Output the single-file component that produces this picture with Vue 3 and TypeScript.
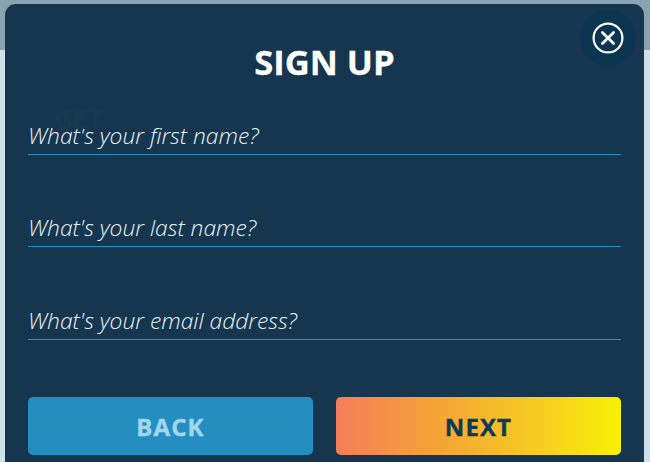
<script setup lang="ts">
const fields: string[] = [
  "What's your first name?",
  "What's your last name?",
  "What's your email address?",
];
</script>

<template>
  <div class="page">
    <div class="backdrop-top"></div>
    <section class="modal">
      <span class="ghost">GET</span>
      <button class="close" type="button" aria-label="Close">
        <svg width="32" height="32" viewBox="0 0 32 32" fill="none" stroke="#fff">
          <circle cx="16" cy="16" r="14.4" stroke-width="2.2" />
          <path d="M10.4 10.4 21.6 21.6M21.6 10.4 10.4 21.6" stroke-width="2.8" stroke-linecap="round" />
        </svg>
      </button>
      <h1 class="title">SIGN UP</h1>
      <form class="fields" @submit.prevent>
        <input v-for="f in fields" :key="f" class="field" type="text" :placeholder="f" />
      </form>
      <div class="actions">
        <button class="btn back" type="button">BACK</button>
        <button class="btn next" type="button">NEXT</button>
      </div>
    </section>
  </div>
</template>

<style>
html, body { margin: 0; padding: 0; background: #cfe0e8; }
</style>

<style scoped>
.page {
  position: relative;
  width: 650px;
  height: 462px;
  overflow: hidden;
  background: #cfe0e8;
  font-family: "Open Sans", "Liberation Sans", sans-serif;
}
.backdrop-top {
  position: absolute;
  inset: 0 0 auto 0;
  height: 50px;
  background: #8aa3b2;
}
.modal {
  position: absolute;
  left: 5px;
  top: 4px;
  width: 639px;
  height: 470px;
  box-sizing: border-box;
  padding: 0 23px;
  background: #15364e;
  border-radius: 11px;
}
.ghost {
  position: absolute;
  left: 49px;
  top: 97px;
  font-size: 26px;
  font-weight: 700;
  color: #17384f;
}
.close {
  position: absolute;
  left: 575px;
  top: 6px;
  width: 56px;
  height: 56px;
  padding: 0;
  border: 0;
  border-radius: 50%;
  background: #0c3551;
  display: flex;
  align-items: center;
  justify-content: center;
}
.title {
  margin: 0;
  padding-top: 35px;
  text-align: center;
  font-size: 34.6px;
  line-height: 46px;
  font-weight: 700;
  color: #fff;
  -webkit-text-stroke: 0.3px #fff;
}
.fields {
  display: flex;
  flex-direction: column;
  gap: 52px;
  margin-top: 30px;
}
.field {
  display: block;
  width: 100%;
  height: 40px;
  box-sizing: border-box;
  padding: 2px 0 0;
  border: 0;
  border-bottom: 1px solid #2590c2;
  border-radius: 0;
  outline: 0;
  background: transparent;
  font-family: inherit;
  font-size: 22.8px;
  font-style: italic;
  font-weight: 300;
  color: #eaf4f8;
}
.field:last-child {
  margin-top: 1px;
}
.field::placeholder {
  color: #eaf4f8;
  opacity: 1;
}
.actions {
  display: flex;
  gap: 23px;
  margin-top: 57px;
}
.btn {
  flex: 1;
  height: 58px;
  padding: 0;
  border: 0;
  border-radius: 5px;
  font-family: inherit;
  font-size: 24px;
  font-weight: 700;
  letter-spacing: 1.1px;
}
.back {
  background: #248ec1;
  color: #a3d6ea;
  -webkit-text-stroke: 0.4px #a3d6ea;
}
.next {
  background: linear-gradient(90deg, #f47e5a 0%, #f5a336 35%, #f6cb22 70%, #f9f005 100%);
  color: #0d3a57;
  -webkit-text-stroke: 0.4px #0d3a57;
}
</style>
